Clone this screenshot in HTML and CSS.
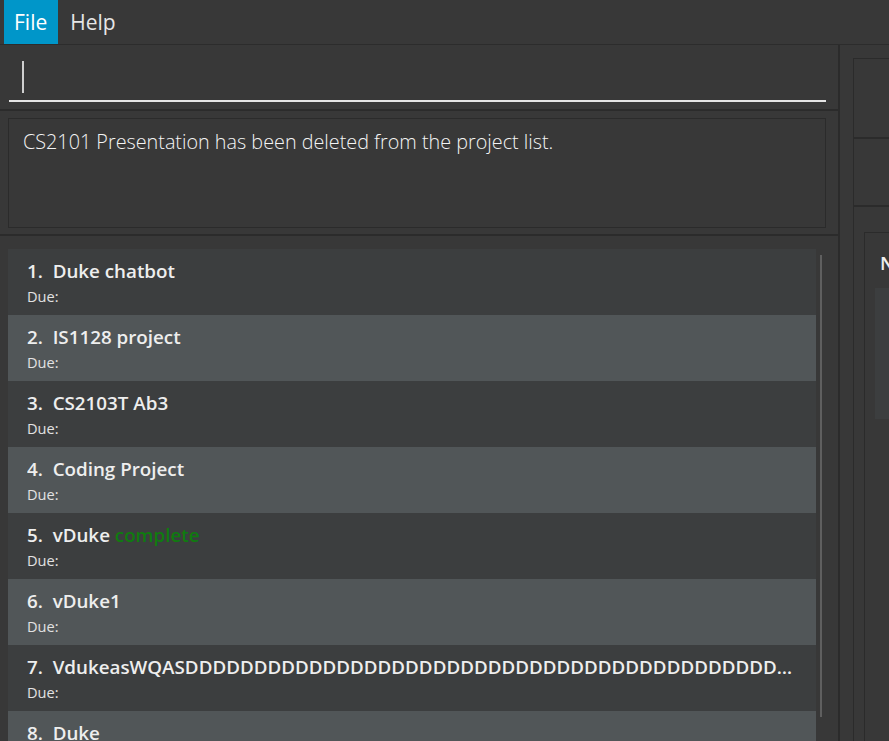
FILE: index.html
```html
<!DOCTYPE html>
<html>
<head>
<meta charset="utf-8">
<link rel="stylesheet" href="styles.css">
</head>
<body>
<div class="app">
  <div class="menubar">
    <div class="menu active">File</div>
    <div class="menu">Help</div>
  </div>
  <div class="main">
    <div class="left">
      <div class="command">
        <div class="field"><span class="caret"></span></div>
      </div>
      <div class="result">
        <div class="result-box">CS2101 Presentation has been deleted from the project list.</div>
      </div>
      <div class="listpane">
        <div class="list">
          <div class="cell"><div class="title">1.&nbsp; Duke chatbot</div><div class="due">Due:</div></div>
          <div class="cell alt"><div class="title">2.&nbsp; IS1128 project</div><div class="due">Due:</div></div>
          <div class="cell"><div class="title">3.&nbsp; CS2103T Ab3</div><div class="due">Due:</div></div>
          <div class="cell alt"><div class="title">4.&nbsp; Coding Project</div><div class="due">Due:</div></div>
          <div class="cell"><div class="title">5.&nbsp; vDuke <span class="complete">complete</span></div><div class="due">Due:</div></div>
          <div class="cell alt"><div class="title">6.&nbsp; vDuke1</div><div class="due">Due:</div></div>
          <div class="cell"><div class="title">7.&nbsp; VdukeasWQASDDDDDDDDDDDDDDDDDDDDDDDDDDDDDDDDDDDDDDDDDDDDDDDDDDDDDDD</div><div class="due">Due:</div></div>
          <div class="cell alt"><div class="title">8.&nbsp; Duke</div><div class="due">Due:</div></div>
        </div>
        <div class="scrollbar"></div>
      </div>
    </div>
    <div class="divider"></div>
    <div class="right">
      <div class="rpanel">
        <div class="rbox"></div>
        <div class="rbox second"></div>
        <div class="rlower">
          <div class="rcard">
            <div class="rhead">N</div>
            <div class="rinner"></div>
          </div>
        </div>
      </div>
    </div>
  </div>
</div>
</body>
</html>
```
FILE: styles.css
```css
html, body {
  margin: 0;
  padding: 0;
  background: #383838;
  overflow: hidden;
}
.app {
  width: 889px;
  height: 741px;
  display: flex;
  flex-direction: column;
  font-family: "Open Sans", "Noto Sans", sans-serif;
  color: #ffffff;
  overflow: hidden;
}
.menubar {
  height: 44px;
  border-bottom: 1px solid #2c2c2c;
  display: flex;
  padding-left: 4px;
  flex: none;
}
.menu {
  padding: 0 12px 0 12px;
  font-size: 21px;
  line-height: 44px;
  color: #e6e6e6;
  font-weight: 400;
}
.menu.active {
  background: #0096c9;
  color: #ffffff;
  padding: 0 11px 0 10px;
}
.main {
  flex: 1;
  display: flex;
  min-height: 0;
}
.left {
  width: 838px;
  display: flex;
  flex-direction: column;
  flex: none;
}
.divider {
  width: 2px;
  background: #2b2b2b;
  flex: none;
}
.right {
  flex: 1;
  overflow: hidden;
  padding: 13px 0 0 13px;
}
.command {
  padding: 0 12px 0 9px;
  border-bottom: 2px solid #2b2b2b;
  box-sizing: border-box;
  height: 66px;
}
.field {
  height: 55px;
  border-bottom: 2px solid #e4e4e4;
  position: relative;
}
.caret {
  position: absolute;
  left: 13px;
  top: 16px;
  width: 1.5px;
  height: 32px;
  background: #cfcfcf;
}
.result {
  height: 125px;
  padding: 7px 12px 0 8px;
  box-sizing: border-box;
  border-bottom: 2px solid #2b2b2b;
}
.result-box {
  height: 110px;
  box-sizing: border-box;
  border: 1px solid #2b2b2b;
  padding: 10px 14px;
  font-size: 19.8px;
  font-weight: 300;
  line-height: 26px;
  color: #f4f4f4;
}
.listpane {
  flex: 1;
  display: flex;
  padding: 13px 0 0 8px;
  min-height: 0;
  overflow: hidden;
}
.list {
  width: 808px;
  flex: none;
}
.cell {
  height: 66px;
  background: #3c3e3f;
  padding: 10px 18px 0 19px;
  box-sizing: border-box;
}
.cell.alt {
  background: #515658;
}
.title {
  font-size: 18.8px;
  font-weight: 600;
  line-height: 25px;
  color: #eeeeee;
  white-space: nowrap;
  overflow: hidden;
  text-overflow: ellipsis;
}
.complete {
  color: #0f7b0f;
}
.due {
  font-size: 14.6px;
  line-height: 20px;
  margin-top: 2px;
  color: #e2e2e2;
}
.scrollbar {
  width: 2px;
  height: 462px;
  margin: 6px 0 0 4px;
  background: #5f5f5f;
  flex: none;
}
.rpanel {
  height: 100%;
  border-left: 1px solid #2b2b2b;
  border-top: 1px solid #2b2b2b;
  display: flex;
  flex-direction: column;
}
.rbox {
  height: 78px;
  border-bottom: 2px solid #2b2b2b;
  flex: none;
}
.rbox.second {
  height: 66px;
}
.rlower {
  padding: 25px 0 0 10px;
}
.rcard {
  border-left: 1px solid #2b2b2b;
  border-top: 1px solid #2b2b2b;
  height: 520px;
  padding: 18px 0 0 10px;
}
.rhead {
  font-size: 18.8px;
  font-weight: 600;
  line-height: 25px;
  color: #eeeeee;
  padding-left: 5px;
}
.rinner {
  margin-top: 12px;
  height: 131px;
  background: #3c3e3f;
}
```
